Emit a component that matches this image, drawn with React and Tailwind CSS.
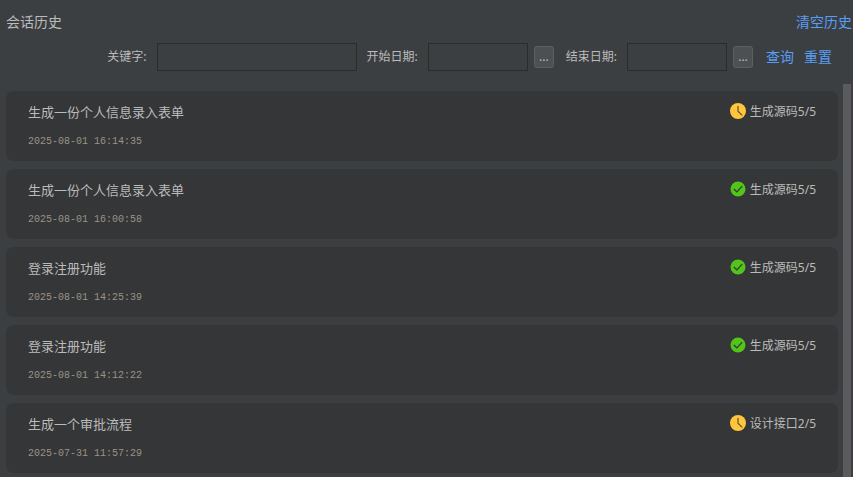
import { useState } from 'react';

const SESSIONS = [
  { id: 1, title: '生成一份个人信息录入表单', time: '2025-08-01 16:14:35', step: '生成源码5/5', done: false },
  { id: 2, title: '生成一份个人信息录入表单', time: '2025-08-01 16:00:58', step: '生成源码5/5', done: true },
  { id: 3, title: '登录注册功能', time: '2025-08-01 14:25:39', step: '生成源码5/5', done: true },
  { id: 4, title: '登录注册功能', time: '2025-08-01 14:12:22', step: '生成源码5/5', done: true },
  { id: 5, title: '生成一个审批流程', time: '2025-07-31 11:57:29', step: '设计接口2/5', done: false },
];

const EMPTY_FILTERS = { keyword: '', start: '', end: '' };

function ClockIcon() {
  return (
    <svg viewBox="0 0 16 16" className="size-4" aria-hidden="true">
      <circle cx="8" cy="8" r="8" fill="#ffc53d" />
      <path d="M8 3V8.2L12.2 12.4" fill="none" stroke="#5b5138" strokeWidth="1.2" />
    </svg>
  );
}

function CheckIcon() {
  return (
    <svg viewBox="0 0 16 16" className="size-4" aria-hidden="true">
      <circle cx="8" cy="8" r="7.5" fill="#52c41a" />
      <path d="M3.8 8L6.9 10.9L12.2 5.2" fill="none" stroke="#353637" strokeWidth="1.2" />
    </svg>
  );
}

function Field({ id, label, width, value, onChange }) {
  return (
    <div className="flex items-center gap-2.5">
      <label htmlFor={id} className="text-xs">{label}</label>
      <input
        id={id}
        type="text"
        value={value}
        onChange={(e) => onChange(e.target.value)}
        className={`${width} h-7 border border-[#2b2b2b] bg-transparent px-1.5 text-xs outline-none focus:border-[#589df6]`}
      />
    </div>
  );
}

function PickerButton({ label }) {
  return (
    <button
      type="button"
      aria-label={label}
      className="h-[22px] w-5 rounded-[3px] border border-[#5e6060] bg-[#4c5052] text-xs leading-5"
    >
      ...
    </button>
  );
}

function SessionCard({ session }) {
  return (
    <li className="flex h-[70px] items-start justify-between rounded-lg bg-[#353637] px-[22px] pt-[11px]">
      <div>
        <h2 className="text-[13px] leading-5">{session.title}</h2>
        <time className="mt-2.5 block font-['Liberation_Mono','Noto_Sans_CJK_SC',monospace] text-[10px] leading-5 text-[#989389]">
          {session.time}
        </time>
      </div>
      <div className="flex items-start gap-1 pt-px">
        {session.done ? <CheckIcon /> : <ClockIcon />}
        <span className="text-xs leading-[18px]">{session.step}</span>
      </div>
    </li>
  );
}

export default function App() {
  const [sessions, setSessions] = useState(SESSIONS);
  const [filters, setFilters] = useState(EMPTY_FILTERS);
  const [query, setQuery] = useState(EMPTY_FILTERS);

  const update = (key) => (value) => setFilters({ ...filters, [key]: value });

  const reset = () => {
    setFilters(EMPTY_FILTERS);
    setQuery(EMPTY_FILTERS);
  };

  const visible = sessions.filter((s) => {
    const day = s.time.slice(0, 10);
    return (
      s.title.includes(query.keyword) &&
      (!query.start || day >= query.start) &&
      (!query.end || day <= query.end)
    );
  });

  return (
    <div className="flex h-screen flex-col overflow-hidden bg-[#3c3f41] font-['Noto_Sans','Noto_Sans_CJK_SC',sans-serif] text-[#bbbbbb]">
      {/* Header */}
      <header className="flex items-center justify-between pt-3 pr-px pl-1.5">
        <h1 className="text-sm leading-5">会话历史</h1>
        <button type="button" onClick={() => setSessions([])} className="text-sm leading-5 text-[#589df6]">
          清空历史
        </button>
      </header>

      {/* Filters */}
      <form
        className="mt-[11px] flex items-center justify-end pr-[21px]"
        onSubmit={(e) => {
          e.preventDefault();
          setQuery(filters);
        }}
      >
        <Field id="keyword" label="关键字:" width="w-[200px]" value={filters.keyword} onChange={update('keyword')} />
        <div className="ml-2.5 flex items-center gap-1.5">
          <Field id="start" label="开始日期:" width="w-[100px]" value={filters.start} onChange={update('start')} />
          <PickerButton label="选择开始日期" />
        </div>
        <div className="ml-3 flex items-center gap-1.5">
          <Field id="end" label="结束日期:" width="w-[100px]" value={filters.end} onChange={update('end')} />
          <PickerButton label="选择结束日期" />
        </div>
        <div className="ml-[13px] flex gap-2.5 text-sm leading-5 text-[#589df6]">
          <button type="submit">查询</button>
          <button type="button" onClick={reset}>重置</button>
        </div>
      </form>

      {/* Session list with its scroll thumb */}
      <div className="mt-[13px] flex min-h-0 flex-1 pr-0.5 pl-1.5">
        <ul className="mr-[5px] flex min-w-0 flex-1 flex-col gap-2 overflow-hidden pt-[7px]">
          {visible.map((s) => (
            <SessionCard key={s.id} session={s} />
          ))}
        </ul>
        <div className="w-2 bg-[#595b5d]" />
      </div>
    </div>
  );
}
